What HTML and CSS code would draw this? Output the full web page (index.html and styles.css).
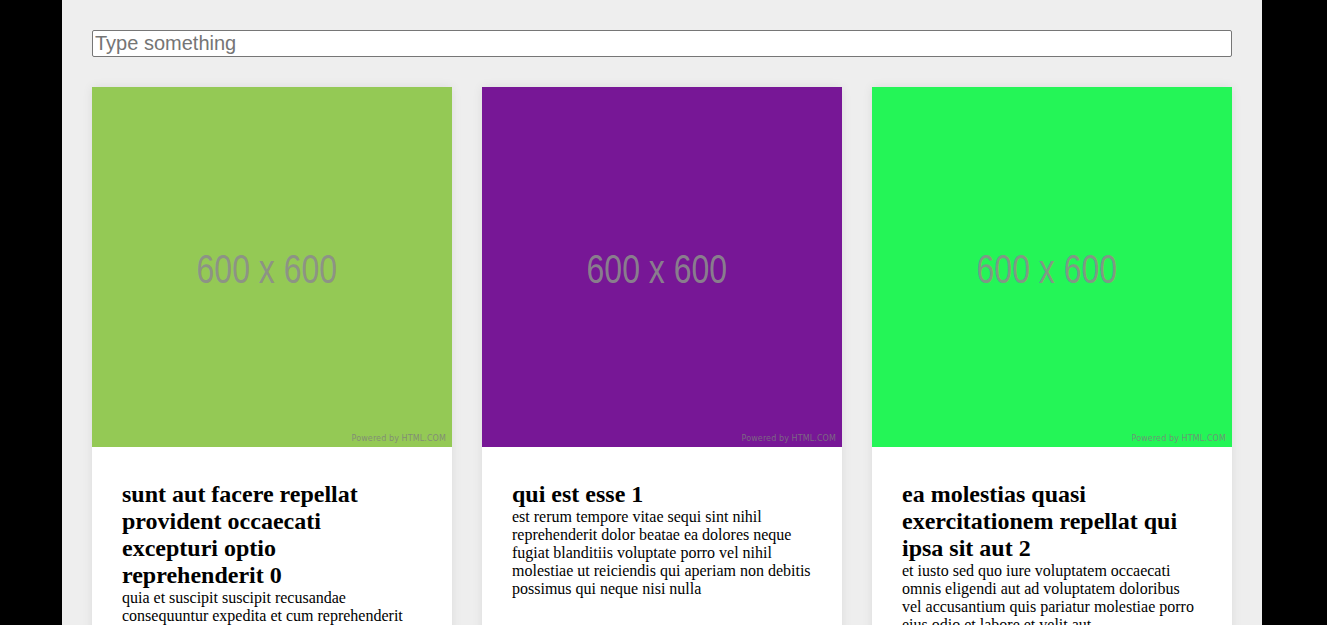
FILE: index.html
```html
<!DOCTYPE html>
<html>
<head>
<meta charset="utf-8">
<link rel="stylesheet" href="styles.css">
</head>
<body>
<div class="page">
  <input class="search" type="text" placeholder="Type something">
  <div class="grid">
    <div class="card">
      <div class="thumb thumb-green">
        <span class="size">600 x 600</span>
        <span class="powered">Powered by HTML.COM</span>
      </div>
      <div class="body">
        <h2 class="title">sunt aut facere repellat provident occaecati excepturi optio reprehenderit 0</h2>
        <p class="text">quia et suscipit suscipit recusandae consequuntur expedita et cum reprehenderit molestiae ut ut quas totam nostrum rerum est autem sunt rem eveniet architecto</p>
      </div>
    </div>
    <div class="card">
      <div class="thumb thumb-purple">
        <span class="size">600 x 600</span>
        <span class="powered">Powered by HTML.COM</span>
      </div>
      <div class="body">
        <h2 class="title">qui est esse 1</h2>
        <p class="text">est rerum tempore vitae sequi sint nihil reprehenderit dolor beatae ea dolores neque fugiat blanditiis voluptate porro vel nihil molestiae ut reiciendis qui aperiam non debitis possimus qui neque nisi nulla</p>
      </div>
    </div>
    <div class="card">
      <div class="thumb thumb-lime">
        <span class="size">600 x 600</span>
        <span class="powered">Powered by HTML.COM</span>
      </div>
      <div class="body">
        <h2 class="title">ea molestias quasi exercitationem repellat qui ipsa sit aut 2</h2>
        <p class="text">et iusto sed quo iure voluptatem occaecati omnis eligendi aut ad voluptatem doloribus vel accusantium quis pariatur molestiae porro eius odio et labore et velit aut</p>
      </div>
    </div>
  </div>
</div>
</body>
</html>
```
FILE: styles.css
```css
html, body {
  margin: 0;
  padding: 0;
  background: #000;
  height: 100%;
  overflow: hidden;
}
body {
  font-family: "Liberation Serif", "Times New Roman", serif;
  padding-right: 3px;
  box-sizing: border-box;
}
.page {
  width: 1140px;
  margin: 0 auto;
  background: #eeeeee;
  padding: 30px 30px;
  min-height: 100%;
  box-sizing: content-box;
}
.search {
  display: block;
  width: 100%;
  box-sizing: border-box;
  height: 27px;
  margin: 0;
  padding: 1px 2px;
  border: 1px solid #767676;
  border-radius: 2px;
  background: #fff;
  font-family: "Liberation Sans", Arial, sans-serif;
  font-size: 20px;
  color: #000;
  outline: none;
}
.search::placeholder {
  color: #757575;
}
.grid {
  display: grid;
  grid-template-columns: repeat(3, 360px);
  gap: 30px;
  margin-top: 30px;
}
.card {
  background: #fff;
  box-shadow: 0 0 10px rgba(0, 0, 0, 0.08);
}
.thumb {
  position: relative;
  height: 360px;
  display: flex;
  align-items: center;
  justify-content: center;
}
.thumb-green { background: #94c955; }
.thumb-purple { background: #771796; }
.thumb-lime { background: #24f557; }
.size {
  font-family: "Liberation Sans", Arial, sans-serif;
  font-size: 40px;
  color: rgba(140, 140, 140, 0.9);
  transform: scaleX(0.8);
  margin-left: -11px;
  margin-top: 4px;
}
.powered {
  position: absolute;
  right: 6px;
  bottom: 4px;
  font-family: "DejaVu Sans", sans-serif;
  font-size: 8px;
  letter-spacing: 0.1px;
  color: rgba(125, 125, 125, 0.8);
}
.body {
  padding: 34px 30px 30px;
}
.title {
  margin: 0;
  font-size: 24px;
  font-weight: bold;
}
.text {
  margin: 0;
  font-size: 16px;
}
```
